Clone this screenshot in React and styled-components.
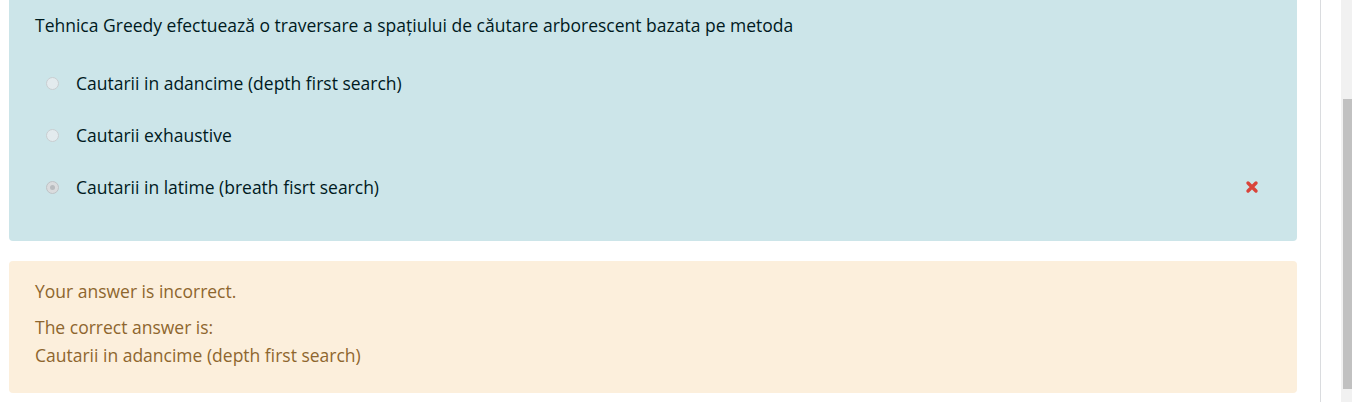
import React from "react";
import styled, { createGlobalStyle } from "styled-components";

const GlobalStyle = createGlobalStyle`
  html, body {
    margin: 0;
    padding: 0;
    background: #fff;
    overflow: hidden;
  }
  body {
    font-family: "Open Sans", "Noto Sans", sans-serif;
  }
`;

const Page = styled.div`
  display: flex;
  height: 402px;
`;

const Main = styled.div`
  width: 1313px;
  padding-left: 9px;
  border-right: 1px solid #dadcdf;
  display: flex;
  flex-direction: column;
`;

const Spacer = styled.div`
  width: 20px;
`;

const Track = styled.div`
  width: 9px;
  background: #f1f1f1;
  display: flex;
  flex-direction: column;
  padding: 99px 0 13px 2px;
`;

const Thumb = styled.div`
  flex: 1;
  background: #c1c1c1;
`;

const Formulation = styled.div`
  width: 1288px;
  box-sizing: border-box;
  margin-top: -10px;
  padding: 21px 26px 28px 26px;
  background: #cce5e9;
  color: #001a1e;
  border-radius: 4px;
  font-size: 17.5px;
  line-height: 28px;
`;

const Question = styled.div`
  margin-bottom: 18px;
`;

const Option = styled.div`
  display: flex;
  align-items: center;
  height: 52px;
`;

const Radio = styled.span`
  width: 13px;
  height: 13px;
  box-sizing: border-box;
  border-radius: 50%;
  margin-left: 11px;
  margin-right: 17px;
  border: 1px solid ${(p) => (p.checked ? "#bfc3c6" : "#c9ced1")};
  background: ${(p) => (p.checked ? "#dadcde" : "#e3ebee")};
  display: flex;
  align-items: center;
  justify-content: center;
  &::after {
    content: "";
    width: 5px;
    height: 5px;
    border-radius: 50%;
    background: ${(p) => (p.checked ? "#b9bcbf" : "transparent")};
  }
`;

const Label = styled.span`
  flex: 1;
`;

const Cross = styled.svg`
  width: 14px;
  height: 14px;
  margin-right: 12px;
`;

const Outcome = styled.div`
  width: 1288px;
  box-sizing: border-box;
  margin-top: 20px;
  padding: 16px 26px 24px 26px;
  background: #fcefdc;
  color: #8e662e;
  border-radius: 4px;
  font-size: 17.5px;
  line-height: 28px;
`;

const Feedback = styled.div`
  margin-bottom: 8px;
`;

const options = [
  { text: "Cautarii in adancime (depth first search)" },
  { text: "Cautarii exhaustive" },
  { text: "Cautarii in latime (breath fisrt search)", checked: true, wrong: true },
];

const App = () => (
  <>
    <GlobalStyle />
    <Page>
      <Main>
        <Formulation>
          <Question>
            Tehnica Greedy efectuează o traversare a spațiului de căutare arborescent bazata pe metoda
          </Question>
          {options.map((o) => (
            <Option key={o.text}>
              <Radio checked={o.checked} />
              <Label>{o.text}</Label>
              {o.wrong && (
                <Cross viewBox="0 0 14 14">
                  <path
                    d="M3 3 L11 11 M11 3 L3 11"
                    stroke="#d9443a"
                    strokeWidth="3.4"
                    strokeLinecap="round"
                  />
                </Cross>
              )}
            </Option>
          ))}
        </Formulation>
        <Outcome>
          <Feedback>Your answer is incorrect.</Feedback>
          <div>The correct answer is:</div>
          <div>Cautarii in adancime (depth first search)</div>
        </Outcome>
      </Main>
      <Spacer />
      <Track>
        <Thumb />
      </Track>
    </Page>
  </>
);

export default App;
